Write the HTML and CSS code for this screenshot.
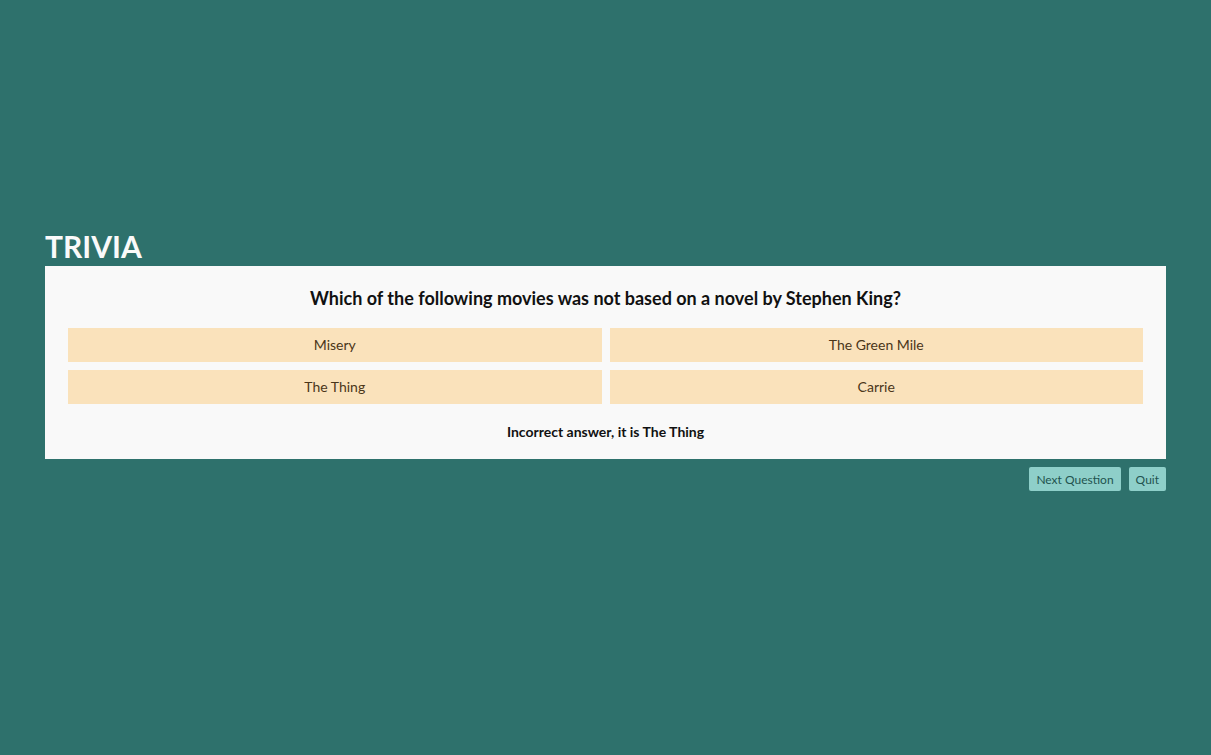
FILE: index.html
```html
<!DOCTYPE html>
<html lang="en">
<head>
<meta charset="utf-8">
<title>Trivia</title>
<link rel="stylesheet" href="styles.css">
</head>
<body>
<main class="app">
  <h1 class="title">TRIVIA</h1>
  <section class="card">
    <h2 class="question">Which of the following movies was not based on a novel by Stephen King?</h2>
    <div class="answers">
      <button class="answer">Misery</button>
      <button class="answer">The Green Mile</button>
      <button class="answer">The Thing</button>
      <button class="answer">Carrie</button>
    </div>
    <p class="feedback">Incorrect answer, it is The Thing</p>
  </section>
  <div class="controls">
    <button class="ctrl">Next Question</button>
    <button class="ctrl">Quit</button>
  </div>
</main>
</body>
</html>
```
FILE: styles.css
```css
html, body {
  margin: 0;
  padding: 0;
  background: #2e716c;
  font-family: Lato, "Open Sans", sans-serif;
}
.app {
  width: 1121px;
  margin: 0 auto;
  padding-top: 226px;
}
.title {
  margin: 0;
  color: #fafafa;
  font-size: 30px;
  font-weight: 700;
  line-height: 40px;
}
.card {
  background: #f9f9f9;
  padding: 18px 23px 17px;
}
.question {
  margin: 0;
  text-align: center;
  font-size: 18px;
  font-weight: 700;
  color: #111;
  line-height: 28px;
}
.answers {
  margin-top: 16px;
  display: grid;
  grid-template-columns: 1fr 1fr;
  gap: 8px;
}
.answer {
  border: none;
  background: #fae2bb;
  color: #4a3619;
  height: 34px;
  font-family: inherit;
  font-size: 14px;
  padding: 0 0 1px;
}
.feedback {
  margin: 18px 0 0;
  text-align: center;
  font-size: 14px;
  font-weight: 700;
  color: #111;
  line-height: 20px;
}
.controls {
  display: flex;
  justify-content: flex-end;
  gap: 8px;
  margin-top: 8px;
}
.ctrl {
  border: none;
  background: #8ecfc9;
  color: #22534f;
  font-family: inherit;
  font-size: 12px;
  height: 24px;
  padding: 0 7px;
  border-radius: 2px;
}
```
